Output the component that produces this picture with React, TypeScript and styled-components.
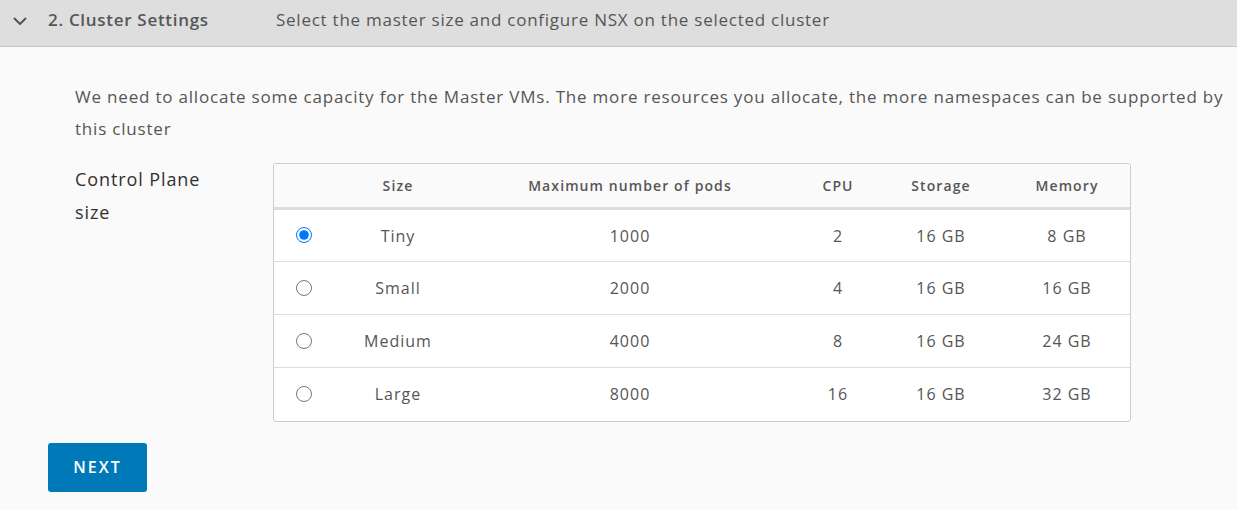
import styled, { createGlobalStyle } from 'styled-components'

const GlobalStyle = createGlobalStyle`
  html, body {
    margin: 0;
    padding: 0;
    background: #fafafa;
    font-family: "Open Sans", "Noto Sans", sans-serif;
    color: #565656;
  }
`

const rows = [
  { size: 'Tiny', pods: '1000', cpu: '2', storage: '16 GB', memory: '8 GB' },
  { size: 'Small', pods: '2000', cpu: '4', storage: '16 GB', memory: '16 GB' },
  { size: 'Medium', pods: '4000', cpu: '8', storage: '16 GB', memory: '24 GB' },
  { size: 'Large', pods: '8000', cpu: '16', storage: '16 GB', memory: '32 GB' },
]

const colWidths = [58, 132, 332, 84, 122, 130]

export default function App() {
  return (
    <Page>
      <GlobalStyle />
      <StepHeader>
        <Chevron viewBox="0 0 14 8" aria-hidden>
          <path d="M1 1 L7 7 L13 1" fill="none" stroke="#555555" strokeWidth="2" />
        </Chevron>
        <StepTitle>2. Cluster Settings</StepTitle>
        <StepDesc>Select the master size and configure NSX on the selected cluster</StepDesc>
      </StepHeader>

      <Body>
        <Intro>
          We need to allocate some capacity for the Master VMs. The more resources you allocate, the more
          namespaces can be supported by this cluster
        </Intro>

        <FormRow>
          <Label>Control Plane size</Label>
          <TableCard>
            <Grid>
              <colgroup>
                {colWidths.map((w, i) => (
                  <col key={i} style={{ width: w }} />
                ))}
              </colgroup>
              <thead>
                <tr>
                  <Th />
                  <Th>Size</Th>
                  <Th>Maximum number of pods</Th>
                  <Th>CPU</Th>
                  <Th>Storage</Th>
                  <Th>Memory</Th>
                </tr>
              </thead>
              <tbody>
                {rows.map((r, i) => (
                  <Tr key={r.size} $last={i === rows.length - 1}>
                    <Td>
                      <Radio type="radio" name="size" defaultChecked={i === 0} />
                    </Td>
                    <Td>{r.size}</Td>
                    <Td>{r.pods}</Td>
                    <Td>{r.cpu}</Td>
                    <Td>{r.storage}</Td>
                    <Td>{r.memory}</Td>
                  </Tr>
                ))}
              </tbody>
            </Grid>
          </TableCard>
        </FormRow>

        <NextButton>NEXT</NextButton>
      </Body>
    </Page>
  )
}

const Page = styled.div`
  width: 1237px;
  height: 510px;
  overflow: hidden;
  background: #fafafa;
`

const StepHeader = styled.div`
  height: 47px;
  box-sizing: border-box;
  display: flex;
  align-items: flex-start;
  padding: 8px 0 0 13px;
  background: #dedede;
  border-bottom: 1px solid #c9c9c9;
  line-height: 24px;
`

const Chevron = styled.svg`
  width: 14px;
  height: 8px;
  margin: 9px 21px 0 0;
`

const StepTitle = styled.div`
  width: 228px;
  font-size: 17px;
  font-weight: 600;
  letter-spacing: 0.7px;
  color: #565656;
`

const StepDesc = styled.div`
  font-size: 17px;
  letter-spacing: 0.75px;
  color: #565656;
`

const Body = styled.div`
  padding: 34px 0 0 48px;
`

const Intro = styled.p`
  margin: 0 0 0 27px;
  width: 1160px;
  font-size: 17px;
  letter-spacing: 0.8px;
  line-height: 32px;
  color: #565656;
`

const FormRow = styled.div`
  display: flex;
  margin: 18px 0 0 27px;
`

const Label = styled.div`
  width: 150px;
  font-size: 18px;
  letter-spacing: 0.9px;
  line-height: 33px;
  color: #313131;
`

const TableCard = styled.div`
  margin-left: 48px;
  width: 856px;
  border: 1px solid #cccccc;
  border-radius: 3px;
  background: #ffffff;
  overflow: hidden;
`

const Grid = styled.table`
  width: 100%;
  border-collapse: collapse;
  table-layout: fixed;
`

const Th = styled.th`
  height: 43px;
  background: #fafafa;
  border-bottom: 3px solid #dddddd;
  font-size: 14px;
  font-weight: 600;
  letter-spacing: 1.1px;
  color: #565656;
  text-align: center;
  padding: 0;
`

const Tr = styled.tr<{ $last?: boolean }>`
  height: 53px;
  border-bottom: ${(p) => (p.$last ? 'none' : '1px solid #dddddd')};
`

const Td = styled.td`
  text-align: center;
  font-size: 16px;
  letter-spacing: 1px;
  color: #565656;
  padding: 0;
  vertical-align: middle;
`

const Radio = styled.input`
  width: 16px;
  height: 16px;
  margin: 4px 0 0 2px;
  accent-color: #0075ff;
`

const NextButton = styled.button`
  margin-top: 21px;
  width: 99px;
  height: 49px;
  border: none;
  border-radius: 3px;
  background: #0079b8;
  color: #ffffff;
  font-family: "Open Sans", "Noto Sans", sans-serif;
  font-size: 16px;
  font-weight: 600;
  letter-spacing: 2px;
  cursor: pointer;
`
